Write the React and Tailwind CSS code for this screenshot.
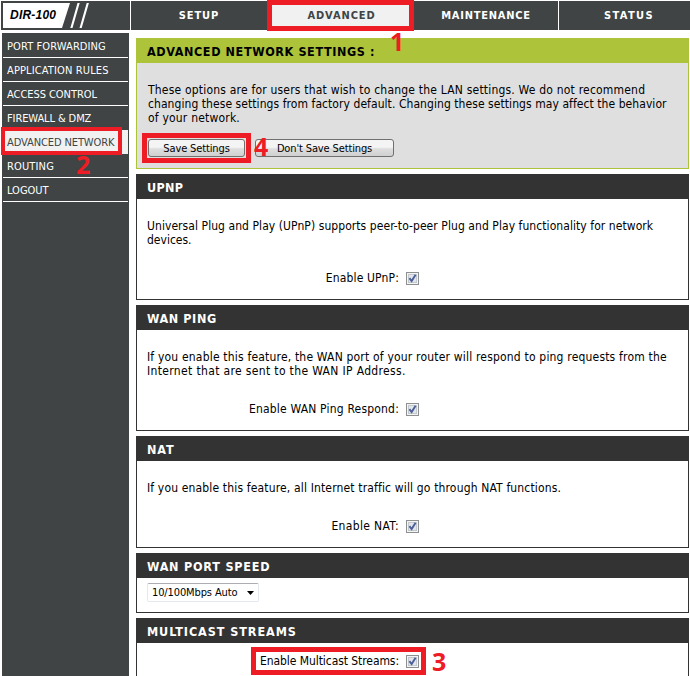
import React from 'react';

const NAV = [
  ['PORT FORWARDING', 'tracking-[0.1px]'],
  ['APPLICATION RULES', 'tracking-[0.13px]'],
  ['ACCESS CONTROL', 'tracking-[-0.05px]'],
  ['FIREWALL & DMZ', 'tracking-[-0.1px]'],
  ['ADVANCED NETWORK', 'tracking-[-0.1px]'],
  ['ROUTING', 'tracking-[0.15px]'],
  ['LOGOUT', 'tracking-[0px]'],
];

function Tab({ children, className }) {
  return (
    <div className={`flex h-[29px] items-center justify-center text-[11px] font-bold ${className}`}>
      <span>{children}</span>
    </div>
  );
}

function Panel({ title, tracking, className, children }) {
  return (
    <section className={`shrink-0 border border-[#333333] bg-white ${className}`}>
      <h2 className={`h-[24px] bg-[#333333] pl-[10px] text-[12.5px] leading-[25px] font-bold text-white ${tracking}`}>
        <span>{title}</span>
      </h2>
      {children}
    </section>
  );
}

function Check({ label, className }) {
  return (
    <div className={`flex h-[14px] items-center ${className}`}>
      <div className="w-[262px] text-right leading-[14px] whitespace-nowrap">
        <span>{label}</span>
      </div>
      <svg className="ml-[7px] h-[13px] w-[13px]" viewBox="0 0 13 13">
        <rect x="0.5" y="0.5" width="12" height="12" fill="#f4f4f4" stroke="#8e8f8f" />
        <rect x="2.5" y="2.5" width="8" height="8" fill="#e2e5ea" stroke="#c3c8cf" />
        <path d="M3.4 6.2 L5.6 9 L9.6 2.8" fill="none" stroke="#4a5f97" strokeWidth="1.9" />
      </svg>
    </div>
  );
}

function Button({ children, className }) {
  return (
    <button
      className={`h-[18px] rounded-[3px] border border-[#707070] bg-linear-to-b from-[#f4f4f4] from-45% via-[#dedede] via-55% to-[#d0d0d0] text-[11px] leading-[15px] tracking-[-0.13px] text-black ${className}`}
    >
      <span>{children}</span>
    </button>
  );
}

export default function App() {
  return (
    <div className="relative h-[676px] w-[690px] overflow-hidden bg-white pt-px font-['DejaVu_Sans_Condensed','DejaVu_Sans',sans-serif] text-[12px] leading-[14px] text-black">
      <header className="flex h-[29px] gap-px pl-px">
        <div className="h-[29px] w-[129px] bg-[#404444]">
          <svg className="h-[29px] w-[129px]" viewBox="0 0 129 29">
            <path d="M2 2H69L61 27H2Z" fill="#fff" />
            <path d="M76.500 2H78.700L71.500 27H69.300Z M85.700 2H87.900L80.700 27H78.500Z" fill="#fff" />
            <text x="9" y="18" fontFamily="Liberation Sans, sans-serif" fontSize="12" fontWeight="bold" fontStyle="italic" textLength="46">DIR-100</text>
          </svg>
        </div>
        <Tab className="w-[136px] bg-[#404444] tracking-[0.9px] text-white">SETUP</Tab>
        <Tab className="w-[145px] bg-[#f1f1f1] pl-[2px] tracking-[0.9px] text-[#404444]">ADVANCED</Tab>
        <Tab className="w-[144px] bg-[#404444] tracking-[0.75px] text-white">MAINTENANCE</Tab>
        <Tab className="w-[131px] bg-[#404444] pl-[9px] tracking-[1.4px] text-white">STATUS</Tab>
      </header>
      <div className="flex pt-[3px]">
        <nav className="ml-[2px] h-[643px] w-[127px] shrink-0 bg-[#404444] px-px pt-px text-[11px] text-white">
          {NAV.map(([name, tracking]) => (
            <div
              key={name}
              className={`h-[24px] border-white pl-[4px] leading-[25px] whitespace-nowrap ${name === 'FIREWALL & DMZ' || name === 'ADVANCED NETWORK' ? '' : 'border-b'} ${name === 'ADVANCED NETWORK' ? 'bg-[#f1f1f1] text-[#404444]' : ''} ${tracking}`}
            >
              <span>{name}</span>
            </div>
          ))}
        </nav>
        <main className="ml-[7px] flex h-[643px] w-[553px] flex-col gap-[5px] pt-[5px]">
          <section className="h-[131px] shrink-0 border border-[#adc43a] bg-[#dfdfdf]">
            <h1 className="h-[24px] bg-[#adc43a] pl-[10px] text-[12.5px] leading-[26px] font-bold tracking-[0.6px]">
              <span>ADVANCED NETWORK SETTINGS :</span>
            </h1>
            <p className="pt-[20px] pl-[11px] whitespace-nowrap">
              <span className="tracking-[0.2px]">These options are for users that wish to change the LAN settings. We do not recommend</span><br />
              <span className="tracking-[0.065px]">changing these settings from factory default. Changing these settings may affect the behavior</span><br />
              <span className="tracking-[0.2px]">of your network.</span>
            </p>
            <div className="flex gap-[10px] pt-[14px] pl-[11px]">
              <Button className="w-[97px]">Save Settings</Button>
              <Button className="w-[139px]">Don't Save Settings</Button>
            </div>
          </section>
          <Panel title="UPNP" tracking="tracking-[0.3px]" className="h-[126px]">
            <p className="pt-[20px] pl-[10px] whitespace-nowrap">
              <span className="tracking-[0.067px]">Universal Plug and Play (UPnP) supports peer-to-peer Plug and Play functionality for network</span><br />
              <span>devices.</span>
            </p>
            <Check className="mt-[24px] tracking-[0.15px]" label="Enable UPnP:" />
          </Panel>
          <Panel title="WAN PING" tracking="tracking-[0.6px]" className="h-[126px]">
            <p className="pt-[20px] pl-[10px] whitespace-nowrap">
              <span className="tracking-[0.19px]">If you enable this feature, the WAN port of your router will respond to ping requests from the</span><br />
              <span className="tracking-[0.35px]">Internet that are sent to the WAN IP Address.</span>
            </p>
            <Check className="mt-[24px] tracking-[0.19px]" label="Enable WAN Ping Respond:" />
          </Panel>
          <Panel title="NAT" tracking="tracking-[0.9px]" className="h-[112px]">
            <p className="pt-[20px] pl-[10px] whitespace-nowrap">
              <span className="tracking-[0.155px]">If you enable this feature, all Internet traffic will go through NAT functions.</span>
            </p>
            <Check className="mt-[24px] tracking-[0.36px]" label="Enable NAT:" />
          </Panel>
          <Panel title="WAN PORT SPEED" tracking="tracking-[0.78px]" className="h-[60px]">
            <div className="mt-[5px] ml-[10px] flex h-[19px] w-[112px] items-center justify-between rounded-[2px] border border-[#e3e9ef] border-t-[#abadb3] bg-white pr-[4px] pl-[4px] text-[11px] tracking-[-0.12px]">
              <span>10/100Mbps Auto</span>
              <svg className="h-[4px] w-[7px]" viewBox="0 0 7 4"><path d="M0 0H7L3.500 4Z" /></svg>
            </div>
          </Panel>
          <Panel title="MULTICAST STREAMS" tracking="tracking-[0.93px]" className="h-[80px]">
            <Check className="mt-[11px] tracking-[-0.07px]" label="Enable Multicast Streams:" />
          </Panel>
        </main>
      </div>
      <div className="absolute top-0 left-[267px] h-[31px] w-[147px] border-5 border-[#ee1c24]" />
      <div className="absolute top-[127px] left-[1px] h-[28px] w-[121px] border-4 border-[#ee1c24]" />
      <div className="absolute top-[133px] left-[142px] h-[30px] w-[109px] border-5 border-[#ee1c24]" />
      <div className="absolute top-[647px] left-[251px] h-[28px] w-[175px] border-5 border-[#ee1c24]" />
      <div className="absolute top-[27px] left-[390px] font-['Open_Sans',sans-serif] text-[25px] leading-[28px] font-bold text-[#ee1c24]">1</div>
      <div className="absolute top-[150px] left-[76px] font-['Open_Sans',sans-serif] text-[25px] leading-[28px] font-bold text-[#ee1c24]">2</div>
      <div className="absolute top-[647px] left-[432px] font-['Open_Sans',sans-serif] text-[25px] leading-[28px] font-bold text-[#ee1c24]">3</div>
      <div className="absolute top-[132px] left-[254px] font-['Open_Sans',sans-serif] text-[25px] leading-[28px] font-bold text-[#ee1c24]">4</div>
    </div>
  );
}
